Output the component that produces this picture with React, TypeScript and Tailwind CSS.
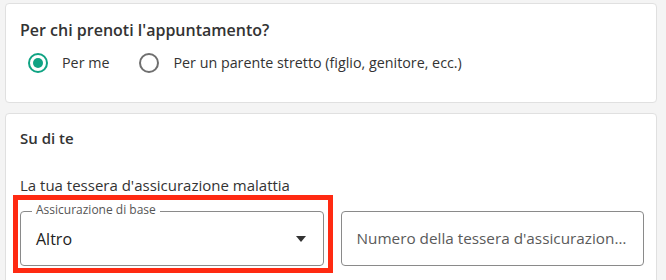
import React from "react";

const font = { fontFamily: "'Open Sans', 'Noto Sans', sans-serif" };

function Radio({ checked, label }: { checked?: boolean; label: string }) {
  return (
    <label className="flex items-center gap-[14px]">
      <span
        className={
          "flex h-[20px] w-[20px] items-center justify-center rounded-full border-2 " +
          (checked ? "border-[#0fa383]" : "border-[#6f6f6f]")
        }
      >
        {checked && <span className="h-[10px] w-[10px] rounded-full bg-[#0fa383]" />}
      </span>
      <span className="text-[14.3px] leading-[20px] text-[#333]">{label}</span>
    </label>
  );
}

export default function App() {
  return (
    <div
      className="h-[280px] w-[666px] overflow-hidden bg-[#f4f4f4] pl-[5px] pr-[9px] pt-[3px]"
      style={font}
    >
      {/* Who is the appointment for */}
      <section className="h-[100px] rounded-[4px] border border-[#e0e0e0] bg-white px-[14px] pt-[16px]">
        <h2 className="text-[16px] font-semibold leading-[20px] text-[#333]">
          Per chi prenoti l'appuntamento?
        </h2>
        <div className="mt-[13px] flex items-center gap-[30px] pl-[8px]">
          <Radio checked label="Per me" />
          <Radio label="Per un parente stretto (figlio, genitore, ecc.)" />
        </div>
      </section>

      {/* About you */}
      <section className="mt-[10px] h-[200px] rounded-[4px] border border-[#e0e0e0] bg-white pl-[14px] pr-[12px] pt-[14px]">
        <h2 className="text-[15px] font-semibold leading-[20px] text-[#333]">Su di te</h2>
        <p className="mt-[27px] text-[15px] leading-[20px] text-[#333]">
          La tua tessera d'assicurazione malattia
        </p>
        <div className="mt-[16px] grid grid-cols-2 gap-[17px]">
          <div className="relative">
            {/* highlight frame */}
            <div className="pointer-events-none absolute -bottom-[7px] -left-[7px] -right-[9px] -top-[16px] border-[5px] border-[#ff2a12]" />
            <div className="flex h-[55px] items-center justify-between rounded-[4px] border border-[#8a8a8a] px-[15px]">
              <span className="text-[16px] text-[#222]">Altro</span>
              <svg width="10" height="6" viewBox="0 0 10 6" className="mr-[2px]">
                <path d="M0 0h10L5 6z" fill="#333" />
              </svg>
            </div>
            <span className="absolute -top-[8px] left-[12px] bg-white px-[4px] text-[12px] leading-[14px] text-[#555]">
              Assicurazione di base
            </span>
          </div>
          <div className="flex h-[55px] items-center rounded-[4px] border border-[#8a8a8a] px-[15px]">
            <span className="truncate text-[15.3px] text-[#5a5a5a]">
              Numero della tessera d'assicurazione malattia
            </span>
          </div>
        </div>
      </section>
    </div>
  );
}
